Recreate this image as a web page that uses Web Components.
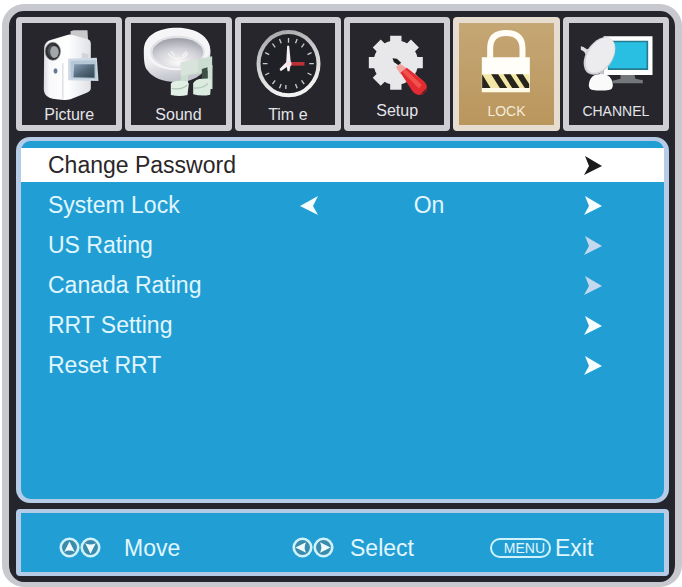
<!DOCTYPE html>
<html lang="en">
<head>
<meta charset="utf-8">
<meta name="viewport" content="width=device-width, initial-scale=1">
<title>TV menu - Lock</title>
<style>
  body {
    display: flex;
    box-sizing: border-box;
    min-height: 100vh;
    margin: 0;
    padding: 4px 0 0 2px;
    background: #fff;
    font-family: "Liberation Sans", Arial, sans-serif;
  }
</style>
</head>
<body>

<tv-frame>
  <tv-tabs slot="tabs">
    <tv-tab icon="picture">Picture</tv-tab>
    <tv-tab icon="sound">Sound</tv-tab>
    <tv-tab icon="time">Tim e</tv-tab>
    <tv-tab icon="setup" raised>Setup</tv-tab>
    <tv-tab icon="lock" raised small active>LOCK</tv-tab>
    <tv-tab icon="channel" raised small>CHANNEL</tv-tab>
  </tv-tabs>

  <tv-menu>
    <tv-row selected>Change Password</tv-row>
    <tv-row value="On">System Lock</tv-row>
    <tv-row dim>US Rating</tv-row>
    <tv-row dim>Canada Rating</tv-row>
    <tv-row>RRT Setting</tv-row>
    <tv-row>Reset RRT</tv-row>
  </tv-menu>

  <tv-hints slot="hints">
    <tv-hint keys="up down" class="move">Move</tv-hint>
    <tv-hint keys="left right" class="select">Select</tv-hint>
    <tv-hint keys="menu" class="exit">Exit</tv-hint>
  </tv-hints>
</tv-frame>

<script>
const icons = {
  picture: `
    <svg viewBox="66 69 282 234" aria-hidden="true">
      <defs>
        <linearGradient id="body"><stop offset="0" stop-color="#d9dce0"/><stop offset=".12" stop-color="#f8f8fa"/><stop offset=".5" stop-color="#fff"/><stop offset="1" stop-color="#dfe1e6"/></linearGradient>
        <linearGradient id="lcd" x2="1" y2="1"><stop offset="0" stop-color="#8b9eb5"/><stop offset=".5" stop-color="#53697a"/><stop offset="1" stop-color="#33474f"/></linearGradient>
      </defs>
      <path d="M211 94l10-3h41l2 36-52 2z" fill="#c9c9cb"/>
      <path d="M132 143q2-20 22-24l50-15q8-2 16 2l44 12q8 3 8 12v134q0 9-12 14l-49 20q-14 4-42 0-25-1-34-15-5-8-4-25z" fill="url(#body)"/>
      <path d="M188 190v106" fill="none" stroke="#cfd2d9" stroke-width="3"/>
      <path d="M245 158l20 4v12h-20z" fill="#d2d4da"/>
      <ellipse cx="158" cy="154" rx="23" ry="27" fill="#2e2f31" stroke="#8d9093" stroke-width="2"/>
      <ellipse cx="162" cy="156" rx="14" ry="18" fill="#a3a7ab"/>
      <path d="M142 152q4-20 20-19-12 9-12 22 0 12 8 18-14-3-16-21z" fill="#4a4d52"/>
      <ellipse cx="166" cy="213" rx="6" ry="8" fill="#657b99"/>
      <path d="M204 176l86-3 5 70-91-2z" fill="#ccd8e3"/>
      <path d="M211 183l76-2 2 56-76-2z" fill="#b4c8d8"/>
      <path d="M222 193h61v40l-63-1z" fill="url(#lcd)"/>
    </svg>`,
  sound: `
    <svg viewBox="396 69 282 234" aria-hidden="true">
      <defs>
        <radialGradient id="cone" cy=".85" r=".8"><stop offset="0" stop-color="#fafafa"/><stop offset=".6" stop-color="#cfcfd6"/><stop offset="1" stop-color="#a2a4ad"/></radialGradient>
        <linearGradient id="rim" x2=".2" y2="1"><stop offset="0" stop-color="#fff"/><stop offset=".65" stop-color="#ededf0"/><stop offset="1" stop-color="#c2c4cc"/></linearGradient>
      </defs>
      <path d="M434 150c0-44 44-67 100-67s100 27 100 69c0 60-40 94-100 94-44 0-74-14-88-34-12-10-12-38-12-62z" fill="url(#rim)"/>
      <ellipse cx="534" cy="148" rx="98" ry="63" fill="#f5f5f7"/>
      <ellipse cx="535" cy="156" rx="82" ry="49" fill="#e1e1e6"/>
      <ellipse cx="536" cy="157" rx="76" ry="43" fill="url(#cone)"/>
      <path d="M508 160q6 15 28 15t30-17M516 154l10 14M562 154l-12 14" fill="none" stroke="#f5f5f6" stroke-width="4"/>
      <path d="M545 188l94-19v39q-44 16-72 18l-1 34h-21z" fill="#cbdcd0"/>
      <path d="M545 188l52-10v38l-52 12z" fill="#dbe5de" opacity=".8"/>
      <path d="M625 195h15v72h-15z" fill="#d0e0d5"/>
      <path d="M608 207l17-5v38h-17z" fill="#3b5144"/>
      <path d="M515 251q3-9 28-9t26 9l-4 34q-23 6-50 0z" fill="#e1efe5"/>
      <path d="M582 250q6-15 32-14 26-4 22 12l-3 36q-25 6-51-1z" fill="#dcebe0"/>
      <path d="M518 265q30 6 46-10M584 264q28 2 42-13" fill="none" stroke="#b1c7b8" stroke-width="4"/>
    </svg>`,
  time: `
    <svg viewBox="33 69 282 234" aria-hidden="true">
      <defs><linearGradient id="ring" x2=".3" y2="1"><stop offset="0" stop-color="#a4a4a7"/><stop offset=".5" stop-color="#cdcdcf"/><stop offset="1" stop-color="#f2f2f2"/></linearGradient></defs>
      <ellipse cx="175" cy="191" rx="90" ry="95" fill="#202126" stroke="url(#ring)" stroke-width="12"/>
      <g stroke="#c8c8cc" stroke-width="4">
        <path d="M175 114v14M167 255v12M98 191h14M237 191h14"/>
        <path d="M127 131l8 11M105 158l12 6M105 225l12-6M127 252l8-11M222 131l-8 11M244 158l-12 6M244 225l-12-6M222 252l-8-11"/>
        <path d="M148 117l5 13M148 265l5-13M201 117l-5 13M201 265l-5-13"/>
      </g>
      <path d="M178 186h45v11h-45z" fill="#bc3036"/>
      <path d="M171 137h6l5 53-4 24h-6l-4-25zM148 207l23-23 10 9-29 21z" fill="#f7f1f5"/>
      <circle cx="176" cy="191" r="8" fill="#f8e3e9"/>
    </svg>`,
  setup: `
    <svg viewBox="360 69 282 234" aria-hidden="true">
      <g fill="#e8e8ea">
        <circle cx="497" cy="188" r="67"/>
        <path id="teeth" d="M480 107h34v162h-34zM416 171h162v34H416z"/>
        <path d="M480 107h34v162h-34zM416 171h162v34H416z" transform="rotate(45 497 188)"/>
      </g>
      <path d="M487 175l13 1 13 12-8 8-14-10z" fill="#211f1e"/>
      <path d="M497 201l13-10 22 15-21 17z" fill="#f1a49d"/>
      <path d="M511 218l19-15 46 36q15 12 14 24l-20 22q-14 0-24-13z" fill="#e22c31"/>
      <path d="M517 216l9-8 49 47-9 10z" fill="#f2524e"/>
      <path d="M568 285q18-5 21-23l2 8-14 15z" fill="#a81a22"/>
    </svg>`,
  lock: `
    <svg viewBox="30 69 282 234" aria-hidden="true">
      <path d="M123 183v-38q0-46 48-46t49 46v38" fill="none" stroke="#fffdf5" stroke-width="18"/>
      <path d="M98 172h144v105H98z" fill="#fffef9"/>
      <path d="M99 223h141v41H99z" fill="#f2e7a5"/>
      <path d="M99 223l25 41H99zM126 223h21l27 41h-22zM163 223h21l27 41h-22zM200 223h21l19 29v12h-13z" fill="#27231d"/>
      <path d="M99 266h142v9H99z" fill="#fff9df"/>
    </svg>`,
  channel: `
    <svg viewBox="357 69 282 234" aria-hidden="true">
      <path d="M460 109h147v116H460z" fill="#fff"/>
      <path d="M473 122h121v88H473z" fill="#247b91"/>
      <path d="M475 127h114v78H475z" fill="#29bfe2"/>
      <path d="M511 225h42l3 11 22 5v9h-91v-8l24-6z" fill="#74777b"/>
      <path d="M392 139l8 2 10 7 14-4 4 10-18 16-8-15-10-6z" fill="#dcdce0"/>
      <ellipse cx="448" cy="168" rx="40" ry="62" transform="rotate(33 448 168)" fill="#d2d2d8"/>
      <ellipse cx="450" cy="166" rx="36" ry="58" transform="rotate(33 450 166)" fill="#ececef"/>
      <path d="M450 215l10-4 5 28-20 4z" fill="#c4c4c9"/>
      <path d="M416 256q2-34 36-34t36 34q0 12-12 14-24 3-48 0-12-2-12-14z" fill="#fafafa"/>
    </svg>`
};

const keyPaths = {
  up: 'M12 5l6 12q-6-3-12 0z',
  down: 'M12 19L6 7q6 3 12 0z',
  left: 'M4 12l12-6q-3 6 0 12z',
  right: 'M20 12L8 18q3-6 0-12z'
};

function arrow(direction) {
  const d = direction === 'left' ? 'M18 0L0 10l18 9-5-9z' : 'M1 0l17 10-18 9 5-9z';
  return `<svg width="18" height="19" viewBox="0 0 18 19" aria-hidden="true"><path d="${d}" fill="currentColor"/></svg>`;
}

class TvFrame extends HTMLElement {
  connectedCallback() {
    this.attachShadow({ mode: 'open' }).innerHTML = `
      <style>
        :host {
          display: flex;
          flex: 1;
          min-width: 0;
          flex-direction: column;
          gap: 6px;
          box-sizing: border-box;
          padding: 6px 6px 6px 7px;
          border: 7px solid #c8c8cf;
          border-bottom-width: 5px;
          border-radius: 22px;
          background: #25252e;
        }
        ::slotted(tv-menu) { flex: 1; }
      </style>
      <slot name="tabs"></slot>
      <slot></slot>
      <slot name="hints"></slot>`;
  }
}

class TvTabs extends HTMLElement {
  connectedCallback() {
    this.attachShadow({ mode: 'open' }).innerHTML = `
      <style>
        :host { display: block; }
        nav {
          display: grid;
          grid-template-columns: repeat(6, minmax(0, 1fr));
          gap: 3px;
        }
      </style>
      <nav aria-label="Menu pages"><slot></slot></nav>`;
  }
}

class TvTab extends HTMLElement {
  connectedCallback() {
    this.attachShadow({ mode: 'open' }).innerHTML = `
      <style>
        :host { display: block; }
        button {
          display: flex;
          flex-direction: column;
          align-items: center;
          justify-content: space-between;
          box-sizing: border-box;
          width: 100%;
          min-height: 114px;
          margin: 0;
          padding: 0;
          border: 6px solid #cfcfd3;
          border-radius: 4px;
          background: #26262c;
          color: #e4e4e8;
          font: 16px/20px "Liberation Sans", Arial, sans-serif;
        }
        svg {
          display: block;
          width: 100%;
          height: 78px;
        }
        span { white-space: pre; }
        :host([raised]) span { padding-bottom: 4px; }
        :host([small]) button { font-size: 14px; }
        :host([active]) button {
          border-color: #e6ddd0;
          background: linear-gradient(#c5a775, #b9965c);
          color: #f5ecdb;
        }
      </style>
      <button type="button">
        ${icons[this.getAttribute('icon')]}
        <span><slot></slot></span>
      </button>`;
    if (this.hasAttribute('active')) {
      this.shadowRoot.querySelector('button').setAttribute('aria-current', 'page');
    }
  }
}

class TvMenu extends HTMLElement {
  connectedCallback() {
    this.attachShadow({ mode: 'open' }).innerHTML = `
      <style>
        :host {
          display: flex;
          flex-direction: column;
          gap: 6px;
          padding-top: 7px;
          border: 5px solid #b5cbe6;
          border-top-width: 4px;
          border-bottom-width: 4px;
          border-radius: 14px;
          background: #219fd4;
        }
      </style>
      <slot></slot>`;
  }
}

class TvRow extends HTMLElement {
  connectedCallback() {
    const value = this.getAttribute('value');

    this.attachShadow({ mode: 'open' }).innerHTML = `
      <style>
        :host {
          display: grid;
          grid-template-columns: 252fr 18px 222fr 62px;
          align-items: center;
          padding: 0 62px 0 27px;
          color: #e2f6ff;
          font-size: 23px;
          line-height: 34px;
        }
        :host([selected]) {
          background: #fff;
          color: #2b2627;
        }
        output { text-align: center; }
        button {
          display: flex;
          padding: 0;
          border: 0;
          background: none;
          color: #f5fdff;
        }
        .next { grid-column: 4; justify-self: end; }
        :host([selected]) button { color: #1c191a; }
        :host([dim]) button { color: #c4d9ed; }
      </style>
      <span id="label"><slot></slot></span>
      ${value ? `
        <button type="button" aria-label="Previous">${arrow('left')}</button>
        <output aria-labelledby="label">${value}</output>` : ''}
      <button type="button" class="next" aria-labelledby="label">${arrow('right')}</button>`;
  }
}

class TvHints extends HTMLElement {
  connectedCallback() {
    this.attachShadow({ mode: 'open' }).innerHTML = `
      <style>
        :host {
          display: grid;
          grid-template-columns: 233fr 198fr 174fr;
          align-items: center;
          box-sizing: border-box;
          min-height: 67px;
          padding: 10px 0 0 38px;
          border: 4px solid #b5cbe6;
          border-width: 4px 5px;
          border-radius: 4px;
          background: #219fd4;
        }
        ::slotted(.move) { --key-gap: 23px; }
        ::slotted(.select) { --key-gap: 16px; }
        ::slotted(.exit) { --key-gap: 4px; }
      </style>
      <slot></slot>`;
  }
}

class TvHint extends HTMLElement {
  connectedCallback() {
    const keys = this.getAttribute('keys').split(' ').map(key => key === 'menu'
      ? '<kbd>MENU</kbd>'
      : `<svg width="21" height="21" viewBox="0 0 24 24" aria-hidden="true">
           <circle cx="12" cy="12" r="10" fill="#3b8bad" stroke="#d0f2fb" stroke-width="3"/>
           <path d="${keyPaths[key]}" fill="#effcff"/>
         </svg>`
    ).join('');

    this.attachShadow({ mode: 'open' }).innerHTML = `
      <style>
        :host {
          display: flex;
          align-items: center;
          gap: var(--key-gap, 16px);
          color: #e2f6ff;
          font-size: 23px;
          line-height: 26px;
        }
        .keys { display: flex; }
        kbd {
          box-sizing: border-box;
          width: 61px;
          padding-right: 4px;
          border: 2px solid #d0f2fb;
          border-radius: 10px;
          font: 14px/16px "Liberation Sans", Arial, sans-serif;
          text-align: right;
        }
      </style>
      <span class="keys">${keys}</span>
      <slot></slot>`;
  }
}

customElements.define('tv-frame', TvFrame);
customElements.define('tv-tabs', TvTabs);
customElements.define('tv-tab', TvTab);
customElements.define('tv-menu', TvMenu);
customElements.define('tv-row', TvRow);
customElements.define('tv-hints', TvHints);
customElements.define('tv-hint', TvHint);
</script>
</body>
</html>
